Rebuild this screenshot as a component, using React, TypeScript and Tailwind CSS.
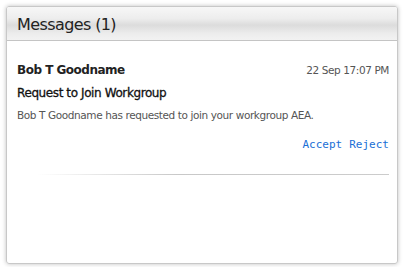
export default function App() {
  return (
    <div className="w-[405px] h-[267px] bg-white p-[6px] pr-[7px] pb-[3px] font-['DejaVu_Sans',sans-serif]">
      <div className="h-[258px] flex flex-col rounded-[3px] border border-[#c8c8c8] shadow-[0_0_4px_rgba(0,0,0,0.25)] overflow-hidden">
        <div className="h-[34px] shrink-0 flex items-center pt-[3px] px-[10px] border-b border-[#c4c4c4] bg-[linear-gradient(to_bottom,#f7f7f7_0%,#ededed_35%,#dcdcdc_55%,#ececec_80%,#f2f2f2_100%)]">
          <span className="text-[16px] text-[#222] tracking-[-0.6px]">Messages (1)</span>
        </div>
        <div className="flex-1 pl-[10px] pr-[8px] pt-[20px]">
          <div className="flex items-baseline justify-between">
            <span className="text-[12px] font-bold text-[#222] tracking-[-0.5px]">Bob T Goodname</span>
            <span className="text-[10.5px] text-[#555] tracking-[-0.4px]">22 Sep 17:07 PM</span>
          </div>
          <div className="mt-[5px] text-[12px] text-[#111] tracking-[-0.4px] [-webkit-text-stroke:0.3px_#111]">Request to Join Workgroup</div>
          <div className="mt-[6px] text-[10.5px] text-[#555] tracking-[-0.4px]">Bob T Goodname has requested to join your workgroup AEA.</div>
          <div className="mt-[13px] flex justify-end gap-[7px] font-['DejaVu_Sans_Mono',monospace] text-[11px] text-[#1a6fd6]">
            <a>Accept</a>
            <a>Reject</a>
          </div>
          <div className="mt-[21px] ml-[20px] h-px bg-[linear-gradient(to_right,rgba(200,200,200,0),#c8c8c8_40%,#cccccc)]" />
        </div>
      </div>
    </div>
  );
}
